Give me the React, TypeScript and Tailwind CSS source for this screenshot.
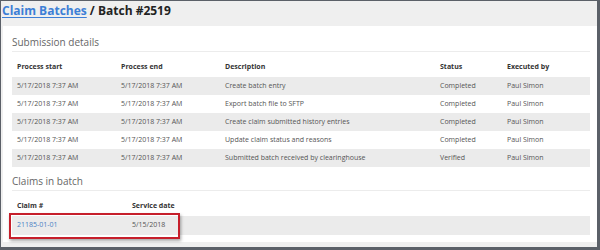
import React from 'react';

interface Step {
  start: string;
  end: string;
  description: string;
  status: string;
  by: string;
}

const steps: Step[] = [
  { start: '5/17/2018 7:37 AM', end: '5/17/2018 7:37 AM', description: 'Create batch entry', status: 'Completed', by: 'Paul Simon' },
  { start: '5/17/2018 7:37 AM', end: '5/17/2018 7:37 AM', description: 'Export batch file to SFTP', status: 'Completed', by: 'Paul Simon' },
  { start: '5/17/2018 7:37 AM', end: '5/17/2018 7:37 AM', description: 'Create claim submitted history entries', status: 'Completed', by: 'Paul Simon' },
  { start: '5/17/2018 7:37 AM', end: '5/17/2018 7:37 AM', description: 'Update claim status and reasons', status: 'Completed', by: 'Paul Simon' },
  { start: '5/17/2018 7:37 AM', end: '5/17/2018 7:37 AM', description: 'Submitted batch received by clearinghouse', status: 'Verified', by: 'Paul Simon' },
];

const cols = 'grid grid-cols-[104px_104px_215px_67px_1fr]';
const cell = 'px-[5px] text-[#555]';
const head = 'px-[5px] text-[#333]';

const App: React.FC = () => {
  return (
    <div className="w-[600px] h-[250px] overflow-hidden bg-[#efefef] border-l border-t border-r-[3px] border-b-[3px] border-[#5b6068] font-['Open_Sans',sans-serif] flex flex-col">

      {/* ===== title bar ===== */}
      <div className="h-[25px] shrink-0 pl-[1px] pt-[1px] text-[12px] font-bold leading-[18px] text-[#222]">
        <a className="text-[#3d7fd6] underline underline-offset-2 decoration-1">Claim Batches</a>
        <span> / Batch #2519</span>
      </div>

      {/* ===== card ===== */}
      <div className="ml-[2px] h-[216px] bg-white pl-[9px] pr-[7px] pt-[8px]">

        <h2 className="text-[10px] leading-[16px] text-[#666] border-b border-[#ececec] pb-[1px]">Submission details</h2>

        <div className="text-[7px]">
          <div className={`${cols} h-[25px] items-end pb-[5px] font-bold`}>
            <div className={head}>Process start</div>
            <div className={head}>Process end</div>
            <div className={head}>Description</div>
            <div className={head}>Status</div>
            <div className={head}>Executed by</div>
          </div>
          {steps.map((s, i) => (
            <div key={i} className={`${cols} h-[18px] items-center ${i % 2 === 0 ? 'bg-[#ebebeb]' : 'bg-white'}`}>
              <div className={cell}>{s.start}</div>
              <div className={cell}>{s.end}</div>
              <div className={cell}>{s.description}</div>
              <div className={cell}>{s.status}</div>
              <div className={cell}>{s.by}</div>
            </div>
          ))}
        </div>

        <h2 className="mt-[6px] text-[10px] leading-[16px] text-[#666] border-b border-[#ececec] pb-[1px]">Claims in batch</h2>

        <div className="relative text-[7px]">
          <div className="grid grid-cols-[115px_1fr] h-[25px] items-end pb-[5px] font-bold">
            <div className={head}>Claim #</div>
            <div className={head}>Service date</div>
          </div>
          <div className="grid grid-cols-[115px_1fr] h-[19px] items-center bg-[#ebebeb]">
            <div className="px-[5px] text-[#4a7fc4]">21185-01-01</div>
            <div className={cell}>5/15/2018</div>
          </div>

          {/* highlight */}
          <div className="absolute left-[-3px] top-[22px] w-[171px] h-[26px] border-2 border-[#c61f2b] shadow-[1px_2px_3px_rgba(0,0,0,0.35)]" />
        </div>

      </div>
    </div>
  );
};

export default App;
